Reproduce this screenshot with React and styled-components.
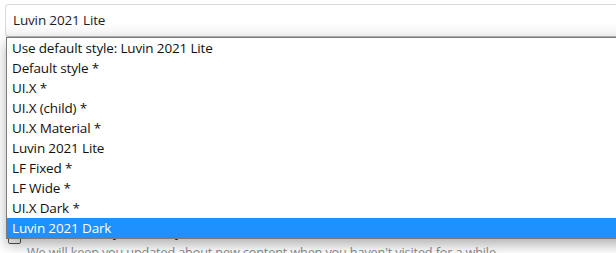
import React, { useState } from "react";
import styled, { createGlobalStyle } from "styled-components";

const GlobalStyle = createGlobalStyle`
  html, body {
    margin: 0;
    padding: 0;
    background: #fff;
    overflow: hidden;
  }
  body {
    font-family: "Open Sans", "Noto Sans", Arial, sans-serif;
    font-size: 13.5px;
    letter-spacing: -0.15px;
    color: #1d1d1d;
  }
`;

const Page = styled.div`
  position: relative;
  width: 616px;
  height: 253px;
  padding: 4px 0 0 5px;
  box-sizing: border-box;
`;

const SelectBox = styled.div`
  width: 700px;
  height: 33px;
  box-sizing: border-box;
  display: flex;
  align-items: center;
  padding: 0 0 1px 7px;
  border: 1px solid #d8d8d8;
  border-bottom-color: #b4b4b4;
  border-radius: 4px;
  background: linear-gradient(to bottom, #ffffff 55%, #f4f4f4);
  color: #1d1d1d;
`;

const OptionRow = styled.label`
  display: flex;
  align-items: flex-start;
  gap: 6px;
  margin: 185px 0 0 3px;
  line-height: 20px;
`;

const Check = styled.span`
  flex: none;
  width: 13px;
  height: 13px;
  margin-top: 9px;
  border: 1px solid #505050;
  border-radius: 2px;
  box-sizing: border-box;
  background: #fff;
`;

const OptionText = styled.div`
  display: flex;
  flex-direction: column;
`;

const Hint = styled.span`
  font-size: 12.7px;
  color: #8a8a8a;
`;

// the open list of the select lies over the form rows
const ListBox = styled.ul`
  position: absolute;
  top: 37px;
  left: 6px;
  width: 700px;
  margin: 0;
  padding: 0;
  list-style: none;
  background: #fff;
  border: 1px solid #7a7a7a;
  box-shadow: 0 6px 12px rgba(0, 0, 0, 0.3);
`;

const Item = styled.li`
  height: 20px;
  line-height: 20px;
  padding-left: 5px;
  white-space: nowrap;
  color: ${({ selected }) => (selected ? "#fff" : "#111")};
  background: ${({ selected }) => (selected ? "#1e90ff" : "transparent")};
`;

const styles = [
  "Use default style: Luvin 2021 Lite",
  "Default style *",
  "UI.X *",
  "UI.X (child) *",
  "UI.X Material *",
  "Luvin 2021 Lite",
  "LF Fixed *",
  "LF Wide *",
  "UI.X Dark *",
  "Luvin 2021 Dark",
];

export default function App() {
  const [hovered, setHovered] = useState(styles.length - 1);

  return (
    <>
      <GlobalStyle />
      <Page>
        <SelectBox>Luvin 2021 Lite</SelectBox>
        <OptionRow>
          <Check />
          <OptionText>
            <span>Receive activity summary email</span>
            <Hint>
              We will keep you updated about new content when you haven't
              visited for a while.
            </Hint>
          </OptionText>
        </OptionRow>
        <ListBox>
          {styles.map((name, i) => (
            <Item
              key={name}
              selected={i === hovered}
              onMouseEnter={() => setHovered(i)}
            >
              {name}
            </Item>
          ))}
        </ListBox>
      </Page>
    </>
  );
}
